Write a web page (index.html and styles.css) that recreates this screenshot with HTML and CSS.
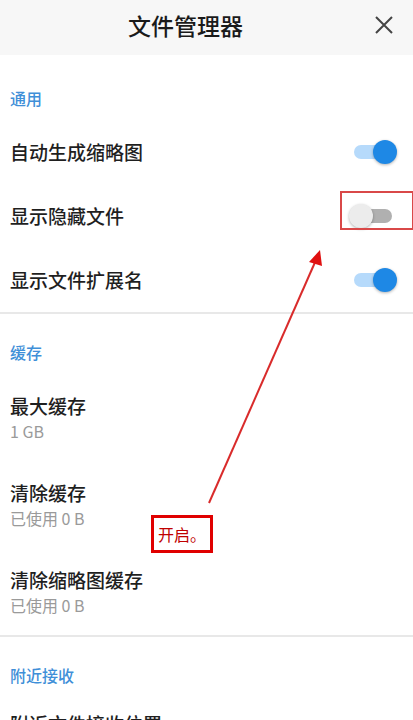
FILE: index.html
```html
<!DOCTYPE html>
<html lang="zh-CN">
<head>
    <meta charset="UTF-8">
    <meta name="viewport" content="width=device-width, initial-scale=1.0">
    <title>文件管理器</title>
    <link rel="stylesheet" href="styles.css">
</head>
<body>
    <div class="page">
        <div class="header">
            <h1>文件管理器</h1>
            <span class="close">
                <svg width="20" height="20" viewBox="0 0 20 20"><path d="M2 2 L18 18 M18 2 L2 18" stroke="#444" stroke-width="2" fill="none"/></svg>
            </span>
        </div>

        <div class="section-title">通用</div>
        <div class="row">
            <span class="label">自动生成缩略图</span>
            <span class="switch on"><span class="track"></span><span class="thumb"></span></span>
        </div>
        <div class="row">
            <span class="label">显示隐藏文件</span>
            <span class="switch"><span class="track"></span><span class="thumb"></span></span>
        </div>
        <div class="row">
            <span class="label">显示文件扩展名</span>
            <span class="switch on"><span class="track"></span><span class="thumb"></span></span>
        </div>

        <div class="divider"></div>

        <div class="section-title">缓存</div>
        <div class="row tall">
            <span class="label">最大缓存</span>
            <span class="sub">1 GB</span>
        </div>
        <div class="row tall">
            <span class="label">清除缓存</span>
            <span class="sub">已使用 0 B</span>
        </div>
        <div class="row tall">
            <span class="label">清除缩略图缓存</span>
            <span class="sub">已使用 0 B</span>
        </div>

        <div class="divider"></div>

        <div class="section-title">附近接收</div>
        <div class="row last">
            <span class="label">附近文件接收位置</span>
        </div>

        <!-- annotation overlays -->
        <div class="mark-box"></div>
        <svg class="arrow" width="413" height="720" viewBox="0 0 413 720">
            <line x1="209" y1="503" x2="316" y2="260" stroke="#d92b2b" stroke-width="2"/>
            <polygon points="320,250 309,262 322,266" fill="#e01010"/>
        </svg>
        <div class="note">开启。</div>
    </div>
</body>
</html>
```
FILE: styles.css
```css
body {
    margin: 0;
    background-color: #fff;
    font-family: "Noto Sans CJK SC", "Noto Sans", sans-serif;
    color: #1f1f1f;
}

.page {
    position: relative;
    width: 413px;
    height: 720px;
    overflow: hidden;
}

.header {
    height: 55px;
    background-color: #f7f7f7;
    display: flex;
    align-items: center;
    justify-content: center;
    padding-right: 42px;
    position: relative;
}

.header h1 {
    margin: 0 0 6px;
    font-size: 23px;
    font-weight: 500;
    color: #1a1a1a;
    line-height: 30px;
}

.close {
    position: absolute;
    right: 19px;
    top: 15px;
    width: 20px;
    height: 20px;
}

.section-title {
    padding: 31px 10px 10px;
    font-size: 16px;
    line-height: 24px;
    font-weight: 500;
    color: #3f8fd8;
}

.divider + .section-title {
    padding-top: 26px;
}

.row {
    height: 64px;
    padding: 0 16px 0 10px;
    display: flex;
    align-items: center;
    justify-content: space-between;
}

.row.tall {
    height: 87px;
    flex-direction: column;
    align-items: flex-start;
    justify-content: center;
}

.row.last {
    height: 40px;
    align-items: flex-end;
}

.label {
    font-size: 19px;
    line-height: 26px;
    font-weight: 500;
    color: #1f1f1f;
}

.sub {
    font-size: 16px;
    line-height: 24px;
    color: #9a9a9a;
}

.divider {
    height: 2px;
    background-color: #e8e8e8;
}

.switch {
    position: relative;
    width: 48px;
    height: 24px;
}

.switch .track {
    position: absolute;
    left: 5px;
    top: 5px;
    width: 38px;
    height: 14px;
    border-radius: 7px;
    background-color: #b0b0b0;
}

.switch .thumb {
    position: absolute;
    left: 0;
    top: 0;
    width: 24px;
    height: 24px;
    border-radius: 50%;
    background-color: #ececec;
    box-shadow: 0 1px 3px rgba(0, 0, 0, 0.3);
}

.switch.on .track {
    background-color: #b6dafb;
}

.switch.on .thumb {
    left: auto;
    right: 0;
    background-color: #1e88e5;
}

.mark-box {
    position: absolute;
    left: 340px;
    top: 191px;
    width: 70px;
    height: 35px;
    border: 2px solid #d94848;
}

.arrow {
    position: absolute;
    left: 0;
    top: 0;
}

.note {
    position: absolute;
    left: 151px;
    top: 515px;
    width: 56px;
    height: 32px;
    border: 3px solid #e00000;
    background-color: #fff;
    color: #c00000;
    font-size: 16px;
    line-height: 32px;
    text-align: center;
}
```
